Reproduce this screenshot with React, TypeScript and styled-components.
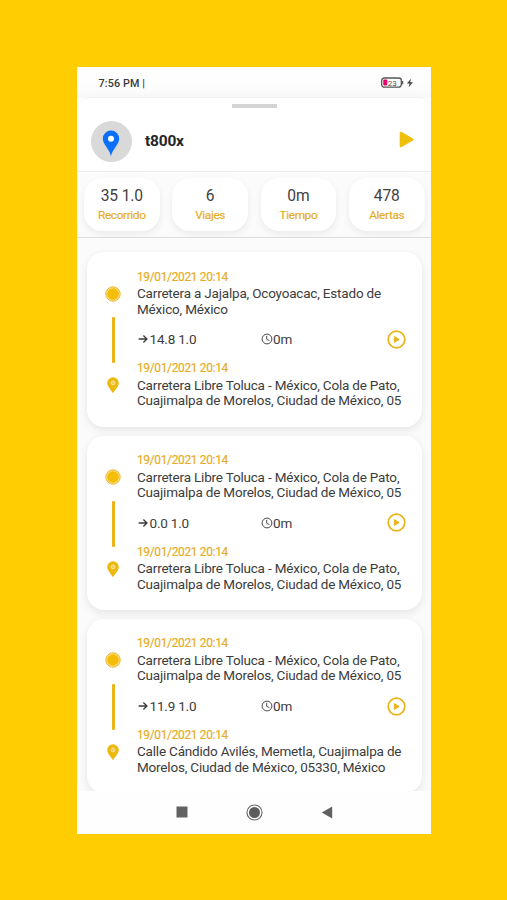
import React from "react";
import styled, { createGlobalStyle } from "styled-components";

const GlobalStyle = createGlobalStyle`
  * { box-sizing: border-box; }
  body { margin: 0; background: #ffcd02; font-family: Roboto, sans-serif; color: #3c3c3c; }
  svg { display: block; flex: none; }
`;

const Page = styled.main`
  width: 507px;
  height: 900px;
  padding: 67.4px 76px 0 77px;
  background: #ffcd02;
  overflow: hidden;
`;

const Phone = styled.section`
  height: 766.3px;
  display: flex;
  flex-direction: column;
  background: #fefefe;
  overflow: hidden;
`;

const StatusBar = styled.header`
  height: 30.9px;
  flex: none;
  display: flex;
  align-items: center;
  justify-content: space-between;
  padding: 1px 17.5px 0 21.5px;
  background: linear-gradient(#fefefe 55%, #f8f8f8);
`;

const Clock = styled.span`
  font-size: 10.8px;
  font-weight: 500;
  letter-spacing: 0.1px;
  color: #3a3a3a;
  white-space: pre;
`;

const Power = styled.div`
  display: flex;
  align-items: center;
  gap: 2px;
`;

const Sheet = styled.div`
  height: 73.5px;
  flex: none;
  border-radius: 14px 14px 0 0;
  background: #fff;
  border-bottom: 1.5px solid #ececec;
  box-shadow: 0 -1px 3px rgba(0, 0, 0, 0.03);
`;

const Handle = styled.div`
  width: 45px;
  height: 4.5px;
  margin: 0 auto;
  background: #d4d4d4;
`;

const HandleRow = styled.div`
  padding-top: 5.3px;
`;

const Device = styled.div`
  display: flex;
  align-items: center;
  padding: 13px 17px 0 13.5px;
`;

const Avatar = styled.div`
  width: 41px;
  height: 41px;
  border-radius: 50%;
  background: #d9d9d9;
  display: grid;
  place-items: center;
  padding-top: 4px;
`;

const DeviceName = styled.h1`
  flex: 1;
  margin: -1px 0 0 13.5px;
  font-size: 15.5px;
  letter-spacing: -0.2px;
  font-weight: 700;
  color: #262626;
`;

const Stats = styled.div`
  height: 66.3px;
  flex: none;
  display: flex;
  gap: 12.7px;
  padding: 6.2px 6.5px 0 7px;
  background: #fbfbfb;
  border-bottom: 1px solid #dedede;
`;

const Stat = styled.div`
  flex: 1;
  height: 53px;
  border-radius: 18px;
  background: #fff;
  box-shadow: 0 3px 7px rgba(0, 0, 0, 0.07);
  display: flex;
  flex-direction: column;
  align-items: center;
  padding-top: 8.7px;
`;

const StatValue = styled.span`
  font-size: 15.6px;
  letter-spacing: -0.15px;
  line-height: 19px;
  color: #424242;
`;

const StatLabel = styled.span`
  margin-top: 2.3px;
  font-size: 11.8px;
  letter-spacing: -0.35px;
  line-height: 15px;
  color: #e6ad24;
  -webkit-text-stroke: 0.2px #e6ad24;
`;

const Trips = styled.div`
  flex: 1;
  min-height: 0;
  overflow: hidden;
  display: flex;
  flex-direction: column;
  gap: 9px;
  padding: 14.2px 9px 0 9.5px;
  background: #fbfbfb;
`;

const Card = styled.article`
  height: 174.3px;
  flex: none;
  display: flex;
  border-radius: 17px;
  background: #fff;
  box-shadow: 0 3px 9px rgba(0, 0, 0, 0.09);
`;

const Rail = styled.div`
  width: 50.5px;
  flex: none;
  padding: 33.5px 0 0 3.4px;
  display: flex;
  flex-direction: column;
  align-items: center;
`;

const Line = styled.div`
  width: 2.6px;
  height: 46px;
  margin: 15.5px 0 14px;
  border-radius: 1px;
  background: #e9b61b;
`;

const Body = styled.div`
  flex: 1;
  padding-top: 17.5px;
`;

const When = styled.div`
  font-size: 11.9px;
  letter-spacing: -0.31px;
  line-height: 15px;
  color: #e6ad24;
  -webkit-text-stroke: 0.2px #e6ad24;
  white-space: nowrap;
`;

const Address = styled.div`
  margin-top: 1.5px;
  font-size: 13.5px;
  letter-spacing: -0.19px;
  line-height: 15.5px;
  white-space: pre;
`;

const Summary = styled.div`
  height: 20px;
  margin: 12.2px 0 11.8px;
  display: grid;
  grid-template-columns: 124px 1fr 35.5px;
  align-items: center;
  font-size: 13.5px;
  letter-spacing: -0.19px;
`;

const Measure = styled.span`
  display: flex;
  align-items: center;
`;

const NavBar = styled.nav`
  height: 42.5px;
  flex: none;
  display: flex;
  align-items: center;
  justify-content: center;
  gap: 58px;
  background: #fefefe;
`;

const BatteryIcon = () => (
  <svg width="23" height="12" viewBox="0 0 23 12">
    <rect x="0.7" y="1" width="19.6" height="9.2" rx="2.6" fill="#fff" stroke="#555" strokeWidth="1.3" />
    <path d="M21.5 4v3.3" stroke="#555" strokeWidth="1.5" />
    <rect x="2.3" y="2.6" width="4" height="6" rx="1" fill="#e6006c" />
    <text x="11.2" y="8.6" textAnchor="middle" fontFamily="Roboto, sans-serif" fontSize="8" fill="#555">23</text>
  </svg>
);

const BoltIcon = () => (
  <svg width="8" height="10" viewBox="0 0 8 10">
    <path d="M5 .8.8 5.6h2.7L2.6 9.2 7 4.2H4.2z" fill="#444" />
  </svg>
);

const BluePin = () => (
  <svg width="18" height="27" viewBox="0 0 18 27">
    <path d="M9 .5a8.2 8.2 0 0 0-8.2 8.2c0 5.8 6.6 9.8 8.2 17.6 1.6-7.8 8.2-11.8 8.2-17.6A8.2 8.2 0 0 0 9 .5z" fill="#0a70fa" />
    <circle cx="9" cy="8.8" r="3" fill="#fff" />
  </svg>
);

const PlayGlyph = styled.svg`
  margin-top: -4px;
`;

const PlayIcon = () => (
  <PlayGlyph width="15" height="17" viewBox="0 0 15 17">
    <path d="M1.8 1.8v13.4L13.4 8.5z" fill="#efbf09" stroke="#efbf09" strokeWidth="2.2" strokeLinejoin="round" />
  </PlayGlyph>
);

const OriginIcon = () => (
  <svg width="16" height="16" viewBox="0 0 16 16">
    <circle cx="8" cy="8" r="7.2" fill="#fbe08a" stroke="#e9b72b" strokeWidth="1" />
    <circle cx="8" cy="8" r="5.8" fill="#f3bd09" />
  </svg>
);

const GoalIcon = () => (
  <svg width="12" height="17" viewBox="0 0 12 17">
    <path d="M6 .3A5.8 5.8 0 0 0 .2 6.1C.2 10.2 4.6 13 6 16.6c1.4-3.6 5.8-6.4 5.8-10.5A5.8 5.8 0 0 0 6 .3z" fill="#edb90f" />
    <circle cx="6" cy="5.9" r="1.9" fill="#f3cd55" stroke="#fbe7a6" strokeWidth="0.9" />
  </svg>
);

const ArrowIcon = () => (
  <svg width="12.5" height="12" viewBox="0 0 12.5 12">
    <path d="M1.6 6h8.2M6.4 2.5 9.9 6 6.4 9.5" fill="none" stroke="#3c3c3c" strokeWidth="1.35" />
  </svg>
);

const TimeIcon = () => (
  <svg width="12" height="12" viewBox="0 0 12 12">
    <circle cx="6" cy="6" r="4.9" fill="none" stroke="#4a4a4a" strokeWidth="1" />
    <path d="M5.7 2.9v3.4l2.7 1.3" fill="none" stroke="#4a4a4a" strokeWidth="1" />
  </svg>
);

const PlayCircleIcon = () => (
  <svg width="19" height="19" viewBox="0 0 19 19">
    <circle cx="9.5" cy="9.5" r="8.3" fill="none" stroke="#e9b41c" strokeWidth="1.7" />
    <path d="M7.4 6.6v5.8l4.7-2.9z" fill="#e9b41c" stroke="#e9b41c" strokeWidth="1" strokeLinejoin="round" />
  </svg>
);

const SquareIcon = () => (
  <svg width="12" height="12" viewBox="0 0 12 12">
    <rect x="0.5" y="0.5" width="11" height="11" fill="#616161" />
  </svg>
);

const HomeIcon = () => (
  <svg width="17" height="17" viewBox="0 0 17 17">
    <circle cx="8.5" cy="8.5" r="7.5" fill="none" stroke="#666" strokeWidth="1.1" />
    <circle cx="8.5" cy="8.5" r="5.5" fill="#5c5c5c" />
  </svg>
);

const BackIcon = () => (
  <svg width="12" height="13" viewBox="0 0 12 13">
    <path d="M11.2.5v12L.8 6.5z" fill="#616161" />
  </svg>
);

const stats = [
  { value: "35 1.0", label: "Recorrido" },
  { value: "6", label: "Viajes" },
  { value: "0m", label: "Tiempo" },
  { value: "478", label: "Alertas" },
];

const pato = "Carretera Libre Toluca - México, Cola de Pato,\nCuajimalpa de Morelos, Ciudad de México, 05";
const when = "19/01/2021 20:14";

const trips = [
  { from: "Carretera a Jajalpa, Ocoyoacac, Estado de\nMéxico, México", distance: "14.8 1.0", to: pato },
  { from: pato, distance: "0.0 1.0", to: pato },
  {
    from: pato,
    distance: "11.9 1.0",
    to: "Calle Cándido Avilés, Memetla, Cuajimalpa de\nMorelos, Ciudad de México, 05330, México",
  },
];

export default function App() {
  return (
    <Page>
      <GlobalStyle />
      <Phone>
        <StatusBar>
          <Clock>7:56 PM |</Clock>
          <Power>
            <BatteryIcon />
            <BoltIcon />
          </Power>
        </StatusBar>
        <Sheet>
          <HandleRow>
            <Handle />
          </HandleRow>
          <Device>
            <Avatar>
              <BluePin />
            </Avatar>
            <DeviceName>t800x</DeviceName>
            <PlayIcon />
          </Device>
        </Sheet>
        <Stats>
          {stats.map((s) => (
            <Stat key={s.label}>
              <StatValue>{s.value}</StatValue>
              <StatLabel>{s.label}</StatLabel>
            </Stat>
          ))}
        </Stats>
        <Trips>
          {trips.map((t) => (
            <Card key={t.distance}>
              <Rail>
                <OriginIcon />
                <Line />
                <GoalIcon />
              </Rail>
              <Body>
                <When>{when}</When>
                <Address>{t.from}</Address>
                <Summary>
                  <Measure>
                    <ArrowIcon />
                    {t.distance}
                  </Measure>
                  <Measure>
                    <TimeIcon />
                    0m
                  </Measure>
                  <PlayCircleIcon />
                </Summary>
                <When>{when}</When>
                <Address>{t.to}</Address>
              </Body>
            </Card>
          ))}
        </Trips>
        <NavBar>
          <SquareIcon />
          <HomeIcon />
          <BackIcon />
        </NavBar>
      </Phone>
    </Page>
  );
}
